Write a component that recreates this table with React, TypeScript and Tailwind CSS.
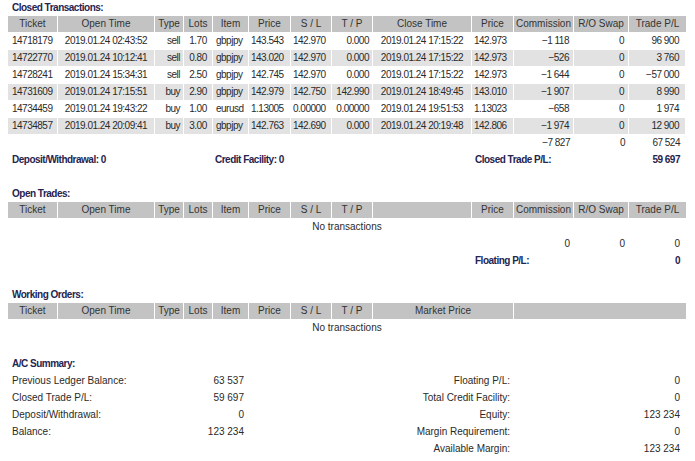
const GRID = 'grid grid-cols-[50px_97px_29px_29px_36px_42px_41px_41px_99px_42px_60px_55px_57px]';

const HEAD = ['Ticket', 'Open Time', 'Type', 'Lots', 'Item', 'Price', 'S / L', 'T / P'];

const ALIGN = [
  'pl-[4px] text-left',
  'text-center',
  'pr-[3px] text-right',
  'text-center',
  'pl-[3px] text-left',
  'pl-[2px] text-left',
  'pl-[2px] text-left',
  'pr-[3px] text-right',
  'text-center',
  'pl-[2px] text-left',
  'pr-[4px] text-right',
  'pr-[4px] text-right',
  'pr-[6px] text-right',
];

const closed = [
  ['14718179', '2019.01.24 02:43:52', 'sell', '1.70', 'gbpjpy', '143.543', '142.970', '0.000', '2019.01.24 17:15:22', '142.973', '−1 118', '0', '96 900'],
  ['14722770', '2019.01.24 10:12:41', 'sell', '0.80', 'gbpjpy', '143.020', '142.970', '0.000', '2019.01.24 17:15:22', '142.973', '−526', '0', '3 760'],
  ['14728241', '2019.01.24 15:34:31', 'sell', '2.50', 'gbpjpy', '142.745', '142.970', '0.000', '2019.01.24 17:15:22', '142.973', '−1 644', '0', '−57 000'],
  ['14731609', '2019.01.24 17:15:51', 'buy', '2.90', 'gbpjpy', '142.979', '142.750', '142.990', '2019.01.24 18:49:45', '143.010', '−1 907', '0', '8 990'],
  ['14734459', '2019.01.24 19:43:22', 'buy', '1.00', 'eurusd', '1.13005', '0.00000', '0.00000', '2019.01.24 19:51:53', '1.13023', '−658', '0', '1 974'],
  ['14734857', '2019.01.24 20:09:41', 'buy', '3.00', 'gbpjpy', '142.763', '142.690', '0.000', '2019.01.24 20:19:48', '142.806', '−1 974', '0', '12 900'],
];

const summary = [
  ['Previous Ledger Balance:', '63 537', 'Floating P/L:', '0'],
  ['Closed Trade P/L:', '59 697', 'Total Credit Facility:', '0'],
  ['Deposit/Withdrawal:', '0', 'Equity:', '123 234'],
  ['Balance:', '123 234', 'Margin Requirement:', '0'],
  ['', '', 'Available Margin:', '123 234'],
];

const Title = ({ children }: { children: React.ReactNode }) => (
  <div className="h-[16px] pl-[12px] flex items-center font-bold text-[#25244f] tracking-[-0.5px]">{children}</div>
);

const Th = ({ children, className = '' }: { children?: React.ReactNode; className?: string }) => (
  <div className={`bg-[#c3c3c3] border-r border-white text-center text-[#333] whitespace-nowrap overflow-hidden ${className}`}>
    {children}
  </div>
);

const HeaderStart = () => (
  <>
    {HEAD.map((h) => (
      <Th key={h}>{h}</Th>
    ))}
  </>
);

export default function App() {
  return (
    <div className="w-[695px] h-[461px] bg-white text-[10px] leading-[16px] text-[#2a2a2a] font-['Liberation_Sans',Arial,sans-serif] overflow-hidden">
      {/* Closed transactions */}
      <Title>Closed Transactions:</Title>
      <div className="pl-[8px] flex flex-col gap-y-px">
        <div className={`${GRID} h-[16px]`}>
          <HeaderStart />
          <Th>Close Time</Th>
          <Th>Price</Th>
          <Th>Commission</Th>
          <Th>R/O Swap</Th>
          <Th className="border-r-0">Trade P/L</Th>
        </div>
        {closed.map((row, i) => (
          <div key={row[0]} className={`${GRID} h-[16px] tracking-[-0.5px]`}>
            {row.map((c, j) => (
              <div
                key={j}
                className={`border-r border-white whitespace-nowrap overflow-hidden ${i % 2 ? 'bg-[#e2e2e2]' : ''} ${ALIGN[j]}`}
              >
                {c}
              </div>
            ))}
          </div>
        ))}
        <div className={`${GRID} h-[16px] tracking-[-0.5px]`}>
          <div className="col-span-10" />
          <div className={ALIGN[10]}>−7 827</div>
          <div className={ALIGN[11]}>0</div>
          <div className={ALIGN[12]}>67 524</div>
        </div>
        <div className={`${GRID} h-[16px] font-bold text-[#25244f] tracking-[-0.5px]`}>
          <div className="col-span-4 pl-[4px] whitespace-nowrap">Deposit/Withdrawal: 0</div>
          <div className="col-span-5 pl-[2px] whitespace-nowrap">Credit Facility: 0</div>
          <div className="col-span-3 pl-[3px] whitespace-nowrap">Closed Trade P/L:</div>
          <div className="pr-[6px] text-right">59 697</div>
        </div>
      </div>

      {/* Open trades */}
      <div className="mt-[18px]">
        <Title>Open Trades:</Title>
        <div className="pl-[8px] flex flex-col gap-y-px">
          <div className={`${GRID} h-[16px]`}>
            <HeaderStart />
            <Th />
            <Th>Price</Th>
            <Th>Commission</Th>
            <Th>R/O Swap</Th>
            <Th className="border-r-0">Trade P/L</Th>
          </div>
          <div className="h-[16px] w-[678px] text-center">No transactions</div>
          <div className={`${GRID} h-[16px]`}>
            <div className="col-span-10" />
            <div className={ALIGN[10]}>0</div>
            <div className={ALIGN[11]}>0</div>
            <div className={ALIGN[12]}>0</div>
          </div>
          <div className={`${GRID} h-[16px] font-bold text-[#25244f] tracking-[-0.5px]`}>
            <div className="col-span-9" />
            <div className="col-span-3 pl-[3px] whitespace-nowrap">Floating P/L:</div>
            <div className="pr-[6px] text-right">0</div>
          </div>
        </div>
      </div>

      {/* Working orders */}
      <div className="mt-[18px]">
        <Title>Working Orders:</Title>
        <div className="pl-[8px] flex flex-col gap-y-px">
          <div className={`${GRID} h-[16px]`}>
            <HeaderStart />
            <Th className="col-span-2">Market Price</Th>
            <Th className="col-span-3 border-r-0" />
          </div>
          <div className="h-[16px] w-[678px] text-center">No transactions</div>
        </div>
      </div>

      {/* Account summary */}
      <div className="mt-[20px]">
        <Title>A/C Summary:</Title>
        <div className="pl-[12px] grid grid-cols-[140px_92px_266px_170px] auto-rows-[17px] items-center">
          {summary.map((r, i) => (
            <div key={i} className="contents">
              <div className="whitespace-nowrap">{r[0]}</div>
              <div className="text-right">{r[1]}</div>
              <div className="text-right whitespace-nowrap">{r[2]}</div>
              <div className="text-right">{r[3]}</div>
            </div>
          ))}
        </div>
      </div>
    </div>
  );
}
